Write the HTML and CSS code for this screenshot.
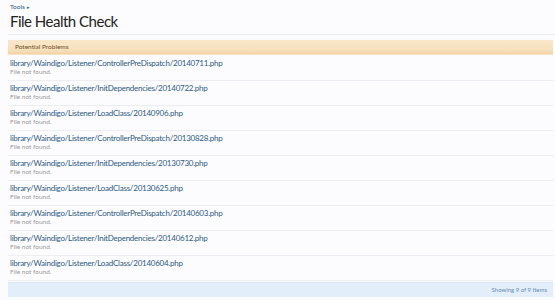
FILE: index.html
```html
<!DOCTYPE html>
<html>
<head>
<meta charset="utf-8">
<link rel="stylesheet" href="styles.css">
</head>
<body>
<div class="page">
  <div class="crumbs"><a href="#">Tools</a><span class="arrow">▸</span></div>
  <h1 class="title">File Health Check</h1>
  <div class="section">
    <div class="sectionHead">Potential Problems</div>
    <ol class="list">
      <li class="item"><a href="#" class="path">library/Waindigo/Listener/ControllerPreDispatch/20140711.php</a><div class="status">File not found.</div></li>
      <li class="item"><a href="#" class="path">library/Waindigo/Listener/InitDependencies/20140722.php</a><div class="status">File not found.</div></li>
      <li class="item"><a href="#" class="path">library/Waindigo/Listener/LoadClass/20140906.php</a><div class="status">File not found.</div></li>
      <li class="item"><a href="#" class="path">library/Waindigo/Listener/ControllerPreDispatch/20130828.php</a><div class="status">File not found.</div></li>
      <li class="item"><a href="#" class="path">library/Waindigo/Listener/InitDependencies/20130730.php</a><div class="status">File not found.</div></li>
      <li class="item"><a href="#" class="path">library/Waindigo/Listener/LoadClass/20130625.php</a><div class="status">File not found.</div></li>
      <li class="item"><a href="#" class="path">library/Waindigo/Listener/ControllerPreDispatch/20140603.php</a><div class="status">File not found.</div></li>
      <li class="item"><a href="#" class="path">library/Waindigo/Listener/InitDependencies/20140612.php</a><div class="status">File not found.</div></li>
      <li class="item"><a href="#" class="path">library/Waindigo/Listener/LoadClass/20140604.php</a><div class="status">File not found.</div></li>
    </ol>
    <div class="sectionFoot">Showing 9 of 9 Items</div>
  </div>
</div>
</body>
</html>
```

FILE: styles.css
```css
html, body {
  margin: 0;
  padding: 0;
  background: #fcfcfe;
}
body {
  font-family: "Lato", "Open Sans", sans-serif;
  font-variant-ligatures: none;
  color: #333;
}
a { text-decoration: none; }
.page {
  padding: 0 2px 0 8px;
}
.crumbs {
  padding: 3px 0 0 2px;
  height: 9px;
  font-size: 6.5px;
  line-height: 7px;
}
.crumbs a { color: #2b5a84; }
.crumbs .arrow {
  color: #2b5a84;
  font-size: 5px;
  margin-left: 2px;
}
.title {
  margin: 0 -2px 0 0;
  padding: 0 0 3px 2px;
  font-size: 15px;
  letter-spacing: -0.5px;
  line-height: 19px;
  font-weight: normal;
  color: #222;
  border-bottom: 1px solid #e6eef2;
}
.section {
  margin-top: 5px;
}
.sectionHead {
  height: 14px;
  line-height: 14px;
  font-size: 6.5px;
  padding-left: 7px;
  color: #6d4f28;
  background: linear-gradient(#f9e7c9, #f7e1bd 70%, #f3d3a6);
  border-bottom: 1px solid #f6e2c3;
}
.list {
  list-style: none;
  margin: 1px 0 0 0;
  padding: 0;
}
.item {
  padding: 2px 2px 4px 2px;
  border-bottom: 1px solid #eceef4;
  display: flex;
  flex-direction: column;
}
.path {
  font-size: 8px;
  letter-spacing: -0.25px;
  line-height: 10px;
  color: #2d5b86;
}
.status {
  font-size: 6.5px;
  line-height: 8px;
  color: #9a9a9a;
}
.sectionFoot {
  margin-top: 1px;
  height: 14px;
  line-height: 14px;
  font-size: 6px;
  text-align: right;
  padding-right: 6px;
  color: #6a8cb2;
  background: #e2eef9;
  border-top: 1px solid #d8e6f3;
}
```
